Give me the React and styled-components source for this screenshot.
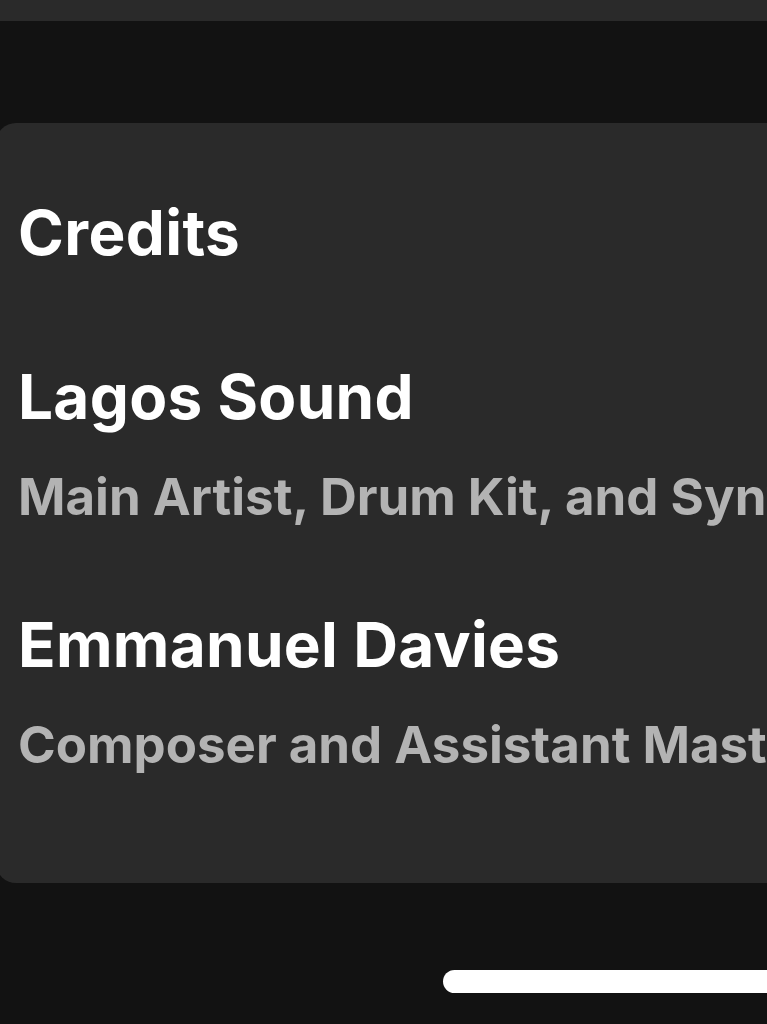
import React from 'react'
import styled, { createGlobalStyle } from 'styled-components'

const GlobalStyle = createGlobalStyle`
    html, body {
        margin: 0;
        padding: 0;
        background: #121212;
        overflow: hidden;
    }
    body {
        font-family: "Inter", "Noto Sans", sans-serif;
        -webkit-font-smoothing: antialiased;
    }
`

const Screen = styled.div`
    width: 767px;
    height: 1024px;
    overflow: hidden;
    background: #121212;
    display: flex;
    flex-direction: column;
`

const TopSheet = styled.div`
    height: 21px;
    margin: 0 -20px;
    background: #2a2a2a;
    border-radius: 0 0 18px 18px;
    flex-shrink: 0;
`

const Card = styled.section`
    margin-top: 102px;
    margin-left: -4px;
    width: 900px;
    height: 760px;
    flex-shrink: 0;
    box-sizing: border-box;
    background: #2a2a2a;
    border-radius: 20px;
    padding: 74px 0 0 22px;
    display: flex;
    flex-direction: column;
    white-space: nowrap;
`

const Heading = styled.h2`
    margin: 0 0 92px;
    font-size: 62px;
    line-height: 72px;
    font-weight: 700;
    color: #ffffff;
    letter-spacing: 0.4px;
`

const Contributor = styled.div`
    display: flex;
    flex-direction: column;
    gap: 34px;
    margin-bottom: 82px;
`

const Name = styled.div`
    font-size: 62px;
    line-height: 72px;
    font-weight: 700;
    color: #ffffff;
    letter-spacing: 0.3px;
`

const Role = styled.div`
    font-size: 51px;
    line-height: 60px;
    font-weight: 700;
    color: #b3b3b3;
    letter-spacing: 0;
`

const HomeIndicator = styled.div`
    margin: 87px 0 0 443px;
    width: 400px;
    height: 23px;
    flex-shrink: 0;
    border-radius: 12px;
    background: #ffffff;
`

const credits = [
    { name: 'Lagos Sound', role: 'Main Artist, Drum Kit, and Synthesizer' },
    { name: 'Emmanuel Davies', role: 'Composer and Assistant Mastering Engineer' },
]

export default function App() {
    return (
        <Screen>
            <GlobalStyle />
            <TopSheet />
            <Card>
                <Heading>Credits</Heading>
                {credits.map(c => (
                    <Contributor key={c.name}>
                        <Name>{c.name}</Name>
                        <Role>{c.role}</Role>
                    </Contributor>
                ))}
            </Card>
            <HomeIndicator />
        </Screen>
    )
}
